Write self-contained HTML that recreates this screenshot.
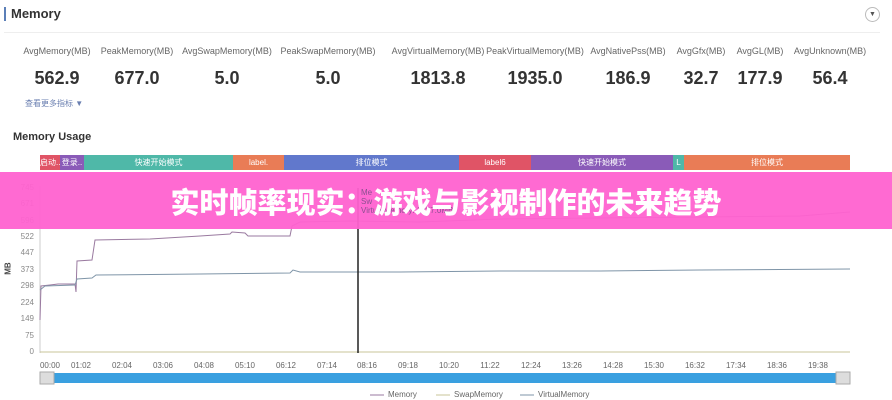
<!DOCTYPE html>
<html><head><meta charset="utf-8"><style>
*{margin:0;padding:0;box-sizing:border-box}
body{width:892px;height:400px;background:#fff;font-family:"Liberation Sans","Noto Sans CJK SC",sans-serif;position:relative;overflow:hidden;color:#333}
.abs{position:absolute}
.lbl{position:absolute;top:46px;font-size:9px;color:#666;transform:translateX(-50%);white-space:nowrap}
.val{position:absolute;top:68px;font-size:18px;font-weight:bold;color:#333;transform:translateX(-50%);white-space:nowrap}
.seg{position:absolute;top:155px;height:15px;color:#fff;font-size:8px;line-height:15px;text-align:center;overflow:hidden;white-space:nowrap}
.yl{position:absolute;left:14px;width:20px;text-align:right;font-size:8px;color:#888}
.xl{position:absolute;top:361px;font-size:8px;color:#666;transform:translateX(-50%)}
</style></head><body>
<div class="abs" style="left:4px;top:7px;width:2px;height:14px;background:#5b7fb8"></div>
<div class="abs" style="left:11px;top:6px;font-size:13px;font-weight:bold;color:#333">Memory</div>
<div class="abs" style="left:865px;top:7px;width:15px;height:15px;border:1px solid #bbb;border-radius:50%;font-size:7px;text-align:center;line-height:13px;color:#555">▼</div>
<div class="abs" style="left:4px;top:32px;width:876px;height:1px;background:#eee"></div>

<div class="lbl" style="left:57px">AvgMemory(MB)</div><div class="val" style="left:57px">562.9</div>
<div class="lbl" style="left:137px">PeakMemory(MB)</div><div class="val" style="left:137px">677.0</div>
<div class="lbl" style="left:227px">AvgSwapMemory(MB)</div><div class="val" style="left:227px">5.0</div>
<div class="lbl" style="left:328px">PeakSwapMemory(MB)</div><div class="val" style="left:328px">5.0</div>
<div class="lbl" style="left:438px">AvgVirtualMemory(MB)</div><div class="val" style="left:438px">1813.8</div>
<div class="lbl" style="left:535px">PeakVirtualMemory(MB)</div><div class="val" style="left:535px">1935.0</div>
<div class="lbl" style="left:628px">AvgNativePss(MB)</div><div class="val" style="left:628px">186.9</div>
<div class="lbl" style="left:701px">AvgGfx(MB)</div><div class="val" style="left:701px">32.7</div>
<div class="lbl" style="left:760px">AvgGL(MB)</div><div class="val" style="left:760px">177.9</div>
<div class="lbl" style="left:830px">AvgUnknown(MB)</div><div class="val" style="left:830px">56.4</div>
<div class="abs" style="left:25px;top:98px;font-size:8px;color:#6a7fb0">查看更多指标 ▼</div>

<div class="abs" style="left:13px;top:131px;font-size:11px;font-weight:bold;color:#333">Memory Usage</div>

<div class="seg" style="left:40px;width:20px;background:#e05466">启动..</div>
<div class="seg" style="left:60px;width:24px;background:#8a5bb8">登录..</div>
<div class="seg" style="left:84px;width:149px;background:#4fb8a8">快速开始模式</div>
<div class="seg" style="left:233px;width:51px;background:#e97c56">label.</div>
<div class="seg" style="left:284px;width:175px;background:#6178cc">排位模式</div>
<div class="seg" style="left:459px;width:72px;background:#e05466">label6</div>
<div class="seg" style="left:531px;width:142px;background:#8a5bb8">快速开始模式</div>
<div class="seg" style="left:673px;width:11px;background:#4fb8a8">L</div>
<div class="seg" style="left:684px;width:166px;background:#e97c56">排位模式</div>

<div class="yl" style="top:183px">745</div><div class="yl" style="top:199px">671</div><div class="yl" style="top:216px">596</div><div class="yl" style="top:232px">522</div><div class="yl" style="top:248px">447</div><div class="yl" style="top:265px">373</div><div class="yl" style="top:281px">298</div><div class="yl" style="top:298px">224</div><div class="yl" style="top:314px">149</div><div class="yl" style="top:331px">75</div><div class="yl" style="top:347px">0</div>
<div class="abs" style="left:2px;top:264px;font-size:8px;font-weight:bold;color:#444;transform:rotate(-90deg)">MB</div>

<svg class="abs" style="left:0;top:0" width="892" height="400">
<line x1="40" y1="186" x2="40" y2="353" stroke="#ccc"/>
<line x1="40" y1="352" x2="850" y2="352" stroke="#c8c49a"/>
<polyline fill="none" stroke="#9a7aa0" stroke-width="1" points="40,320 41,286 50,285 58,284 75,284 76,292 77,261 92,260 95,240 150,239 200,236 230,234 232,232 245,233 248,236 290,236 292,226 300,222 350,221 420,222 500,219 600,218 700,217 800,216 850,212"/>
<polyline fill="none" stroke="#7f95a8" stroke-width="1" points="40,290 45,286 75,285 77,279 92,278 96,275 200,274 290,273 293,270 300,272 400,272 500,271 600,271 700,270 850,269"/>
<line x1="358" y1="188" x2="358" y2="353" stroke="#222" stroke-width="1.5"/>
<rect x="40" y="373" width="810" height="10" fill="#3aa0e0"/>
<rect x="40" y="372" width="14" height="12" fill="#ddd" stroke="#aaa"/>
<rect x="836" y="372" width="14" height="12" fill="#ddd" stroke="#aaa"/>
<line x1="370" y1="395" x2="384" y2="395" stroke="#9a7aa0"/>
<line x1="436" y1="395" x2="450" y2="395" stroke="#c8c49a"/>
<line x1="520" y1="395" x2="534" y2="395" stroke="#7f95a8"/>
</svg>
<div class="xl" style="left:50px">00:00</div><div class="xl" style="left:81px">01:02</div><div class="xl" style="left:122px">02:04</div><div class="xl" style="left:163px">03:06</div><div class="xl" style="left:204px">04:08</div><div class="xl" style="left:245px">05:10</div><div class="xl" style="left:286px">06:12</div><div class="xl" style="left:327px">07:14</div><div class="xl" style="left:367px">08:16</div><div class="xl" style="left:408px">09:18</div><div class="xl" style="left:449px">10:20</div><div class="xl" style="left:490px">11:22</div><div class="xl" style="left:531px">12:24</div><div class="xl" style="left:572px">13:26</div><div class="xl" style="left:613px">14:28</div><div class="xl" style="left:654px">15:30</div><div class="xl" style="left:695px">16:32</div><div class="xl" style="left:736px">17:34</div><div class="xl" style="left:777px">18:36</div><div class="xl" style="left:818px">19:38</div>
<div class="abs" style="left:388px;top:390px;font-size:8px;color:#666">Memory</div>
<div class="abs" style="left:454px;top:390px;font-size:8px;color:#666">SwapMemory</div>
<div class="abs" style="left:538px;top:390px;font-size:8px;color:#666">VirtualMemory</div>

<div class="abs" style="left:0;top:172px;width:892px;height:57px;background:rgba(255,98,208,0.95)"></div>
<div class="abs" style="left:361px;top:188px;font-size:8px;color:#8a5090">Me<br>Sw<br>VirtualMemory: 1837.0MB</div>
<div class="abs" style="left:160px;top:183px;width:572px;text-align:center;font-size:29px;font-weight:900;color:#fff;font-family:'Noto Sans CJK SC',sans-serif;line-height:36px;letter-spacing:0px;white-space:nowrap">实时帧率现实：游戏与影视制作的未来趋势</div>
</body></html>
